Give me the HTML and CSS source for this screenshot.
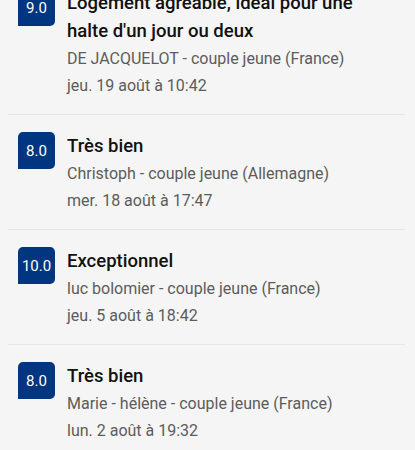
FILE: index.html
```html
<!DOCTYPE html>
<html lang="fr">
<head>
    <meta charset="UTF-8">
    <meta name="viewport" content="width=device-width, initial-scale=1.0">
    <title>Avis</title>
    <link rel="stylesheet" href="styles.css">
</head>
<body>
    <!-- Liste des avis (déjà défilée) -->
    <ul class="avis">
        <li class="avis-item">
            <div class="note">9.0</div>
            <div class="avis-texte">
                <h2 class="titre">Logement agréable, idéal pour une halte d'un jour ou deux</h2>
                <p class="auteur">DE JACQUELOT - couple jeune (France)</p>
                <p class="date">jeu. 19 août à 10:42</p>
            </div>
        </li>
        <li class="avis-item">
            <div class="note">8.0</div>
            <div class="avis-texte">
                <h2 class="titre">Très bien</h2>
                <p class="auteur">Christoph - couple jeune (Allemagne)</p>
                <p class="date">mer. 18 août à 17:47</p>
            </div>
        </li>
        <li class="avis-item">
            <div class="note">10.0</div>
            <div class="avis-texte">
                <h2 class="titre">Exceptionnel</h2>
                <p class="auteur">luc bolomier - couple jeune (France)</p>
                <p class="date">jeu. 5 août à 18:42</p>
            </div>
        </li>
        <li class="avis-item">
            <div class="note">8.0</div>
            <div class="avis-texte">
                <h2 class="titre">Très bien</h2>
                <p class="auteur">Marie - hélène - couple jeune (France)</p>
                <p class="date">lun. 2 août à 19:32</p>
            </div>
        </li>
    </ul>
</body>
</html>
```

FILE: styles.css
```css
body {
    background-color: #f5f5f5;
    color: #1a1a1a;
    margin: 0;
    font-family: 'Roboto', 'Liberation Sans', sans-serif;
    overflow: hidden;
}

.avis {
    list-style: none;
    margin: -29px 0 0 0; /* la liste est défilée */
    padding: 0;
}

.avis-item {
    display: flex;
    gap: 12px;
    margin: 0 10px 0 8px;
    padding: 17px 30px 15px 10px;
    border-top: 1px solid #e6e6e6;
}

.note {
    flex: none;
    width: 37px;
    height: 37px;
    background-color: #003580;
    color: #fff;
    border-radius: 5px 5px 5px 0;
    font-size: 15px;
    display: flex;
    align-items: center;
    justify-content: center;
}

.avis-texte {
    flex: 1;
}

.titre {
    margin: 0;
    font-size: 18.5px;
    font-weight: 500;
    line-height: 28px;
    color: #111;
}

.auteur, .date {
    margin: 0;
    font-size: 16px;
    line-height: 27px;
    color: #5c5c5c;
}
```
